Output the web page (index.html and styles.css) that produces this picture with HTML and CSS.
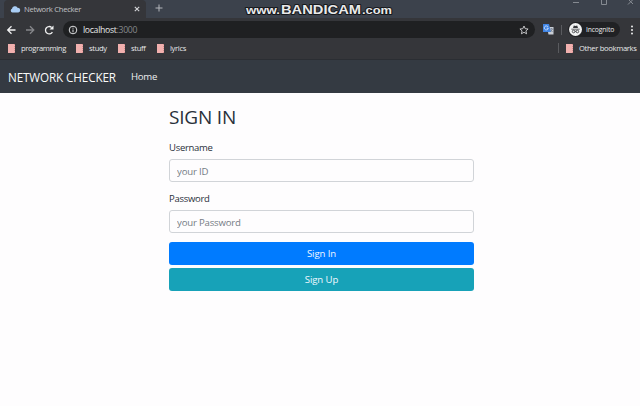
FILE: index.html
```html
<!DOCTYPE html>
<html lang="en">
<head>
<meta charset="utf-8">
<title>Network Checker</title>
<link rel="stylesheet" href="styles.css">
</head>
<body>
<div class="tabstrip">
  <div class="tab">
    <svg class="cloud" width="11" height="8" viewBox="0 0 11 8"><path d="M2.3 7.6A2 2 0 0 1 2 3.8 3 3 0 0 1 7.5 2.7 2.5 2.5 0 0 1 8.4 7.6Z" fill="#a9cdf5"/></svg>
    <span class="tab-title">Network Checker</span>
    <svg class="tab-close" width="6" height="6" viewBox="0 0 6 6"><path d="M.8.8 5.2 5.2M5.2.8.8 5.2" stroke="#d4d5d8" stroke-width="1.1"/></svg>
  </div>
  <svg class="plus" width="8" height="8" viewBox="0 0 8 8"><path d="M4 .5v7M.5 4h7" stroke="#b4b7bc" stroke-width="1"/></svg>
  <div class="window-controls">
    <svg width="60" height="6" viewBox="0 0 60 6" fill="none" stroke="#858a91"><path d="M0 2.5h6"/><path d="M28.500 0v4.500h5V0"/><path d="M55 4.500 60-.500M56 0l4.500 4.500"/></svg>
  </div>
  <svg class="watermark" width="152" height="18" viewBox="0 0 152 18">
    <g font-family="Liberation Sans, sans-serif" font-weight="bold" fill="#e9e9ea" stroke="#17191d" stroke-width="1.8" paint-order="stroke" stroke-linejoin="round">
      <text x="4" y="13.500" font-size="10" textLength="34" lengthAdjust="spacingAndGlyphs">www.</text>
      <text x="39" y="13.500" font-size="12" textLength="80" lengthAdjust="spacingAndGlyphs">BANDICAM</text>
      <text x="120" y="13.500" font-size="10" textLength="30" lengthAdjust="spacingAndGlyphs">.com</text>
    </g>
  </svg>
</div>
<div class="toolbar">
  <div class="nav-icons">
    <svg width="49" height="12" viewBox="0 0 49 12" fill="none" stroke="#f1f1f2" stroke-width="1.300"><path d="M9.500 6H2M5.500 2.200 1.700 6l3.800 3.800"/><path stroke="#85868a" d="M20 6h7.500M24 2.200 27.800 6 24 9.800"/><path d="M46.400 8.100A3.700 3.700 0 1 1 45.600 3.400"/><path fill="#f1f1f2" stroke="none" d="M47.500 1.400v4h-4z"/></svg>
  </div>
  <div class="omnibox">
    <svg width="10" height="10" viewBox="0 0 10 10"><circle cx="5" cy="5" r="3.800" fill="none" stroke="#dcdddf"/><path d="M5 4.500v2.800M5 2.700v1" stroke="#dcdddf"/></svg>
    <span class="url">localhost<span class="port">:3000</span></span>
    <svg class="star" width="10" height="10" viewBox="0 0 10 10"><path d="m5 1 1.200 2.700 2.900.3-2.200 1.900.7 2.900L5 7.300 2.400 8.800l.7-2.900L.9 4l2.900-.3z" fill="none" stroke="#d2d3d5" stroke-width=".9"/></svg>
  </div>
  <svg class="translate" width="11" height="11" viewBox="0 0 11 11"><path d="M4 3h6.500v7.500H5.500z" fill="#c9ced6"/><path d="M0 0h6l2 8H0z" fill="#3f84e4"/><path d="M5.100 3A2 2 0 1 0 5.300 4.200H3.700" fill="none" stroke="#e4efff" stroke-width=".8"/><path d="M7 5h3M8.500 4v1M9.500 5 7.500 8M7.700 6l2 2" stroke="#66717f" stroke-width=".6"/></svg>
  <i class="divider"></i>
  <div class="incognito">
    <svg width="13" height="13" viewBox="0 0 13 13"><circle cx="6.500" cy="6.500" r="6.500" fill="#f2f3f3"/><path d="M2.300 5.700h8.400v.8H2.300zM4 5.100l.8-2.500 1.700.4 1.700-.4.8 2.500z" fill="#34363a"/><g fill="none" stroke="#34363a" stroke-width=".8"><circle cx="4.600" cy="8.500" r="1.300"/><circle cx="8.400" cy="8.500" r="1.300"/><path d="M5.900 8.300h1.200"/></g></svg>
    <span>Incognito</span>
  </div>
  <svg class="more" width="4" height="10" viewBox="0 0 4 10" fill="#ececed"><circle cx="2" cy="1.500" r="1"/><circle cx="2" cy="5" r="1"/><circle cx="2" cy="8.500" r="1"/></svg>
</div>
<div class="bookmarks">
  <i class="page-icon"></i><span class="bm programming">programming</span>
  <i class="page-icon"></i><span class="bm study">study</span>
  <i class="page-icon"></i><span class="bm stuff">stuff</span>
  <i class="page-icon"></i><span class="bm lyrics">lyrics</span>
  <i class="divider last"></i><i class="page-icon"></i><span class="bm other">Other bookmarks</span>
</div>
<nav class="navbar">
  <a class="brand">NETWORK CHECKER</a>
  <a class="home">Home</a>
</nav>
<main class="form">
  <h1>SIGN IN</h1>
  <label for="user">Username</label>
  <input id="user" type="text" placeholder="your ID">
  <label for="pass">Password</label>
  <input id="pass" type="password" placeholder="your Password">
  <button class="primary">Sign In</button>
  <button class="info">Sign Up</button>
</main>
</body>
</html>
```
FILE: styles.css
```css
* { box-sizing: border-box; }
body {
  margin: 0;
  width: 640px;
  height: 406px;
  overflow: hidden;
  background: #fefdfe;
  color: #29303a;
  font-family: "Open Sans", "Noto Sans", sans-serif;
  font-size: 10px;
}
svg { display: block; flex: none; }
.tabstrip {
  position: relative;
  display: flex;
  height: 18px;
  background: #3c424c;
}
.tab {
  display: flex;
  align-items: center;
  width: 142px;
  height: 18px;
  margin-left: 4px;
  padding: 0 6px;
  border-radius: 4px 4px 0 0;
  background: #35363a;
}
.tab-title {
  margin-left: 3px;
  color: #c2c3c7;
  font-size: 7.7px;
  line-height: 16px;
  letter-spacing: -.3px;
  white-space: nowrap;
}
.tab-close { margin-left: auto; }
.plus { margin: 4px 0 0 9px; }
.window-controls { margin: 0 32px 0 auto; width: 34px; }
.window-controls svg { margin-left: -1px; }
.watermark { position: absolute; left: 242px; top: 0; }
.toolbar {
  display: flex;
  align-items: center;
  height: 23px;
  background: #35363a;
}
.nav-icons { width: 63px; padding-left: 6px; }
.omnibox {
  display: flex;
  align-items: center;
  width: 472px;
  height: 17px;
  padding: 0 6px 0 5px;
  border-radius: 9px;
  background: #1f2022;
}
.url {
  margin-left: 5px;
  color: #e6e7e8;
  font-size: 8.7px;
  line-height: 16px;
  letter-spacing: -.32px;
}
.port { color: #85888c; }
.star { margin-left: auto; }
.translate { margin-left: 8px; }
.divider {
  flex: none;
  width: 1px;
  height: 10px;
  margin-left: 7px;
  background: #5a5b5f;
}
.incognito {
  display: flex;
  align-items: center;
  width: 52px;
  height: 15px;
  margin-left: 6px;
  padding-left: 1px;
  border-radius: 8px;
  background: #202124;
  color: #eceded;
  font-size: 6.8px;
  letter-spacing: -.15px;
}
.incognito span { margin-left: 4px; }
.more { margin-left: 10px; }
.bookmarks {
  display: flex;
  align-items: center;
  height: 18px;
  padding: 0 4px 4px 8px;
  background: #35363a;
  color: #e8e9ea;
  font-size: 7.6px;
  line-height: 12px;
  letter-spacing: -.32px;
}
.page-icon {
  flex: none;
  width: 7px;
  height: 9px;
  margin-top: 1px;
  border-right: 1px dotted #d58d8d;
  background: #f1b0ae;
}
.bm { flex: none; margin-left: 6px; white-space: nowrap; }
.programming { width: 55px; }
.study { width: 29px; }
.stuff { width: 26px; }
.last { margin-left: auto; margin-right: 7px; }
.other { width: 57px; }
.navbar {
  display: flex;
  align-items: center;
  height: 34px;
  padding-left: 8px;
  border-top: 1px solid #2b2e33;
  background: #343a42;
}
.brand { width: 123px; color: #fafafa; font-size: 11.7px; letter-spacing: -.12px; white-space: nowrap; }
.home { color: #eeeff0; font-size: 9.6px; letter-spacing: -.25px; }
.form { display: flex; flex-direction: column; width: 305px; margin-left: 169px; }
h1 {
  height: 26px;
  margin: 11px 0 10px;
  font-size: 19px;
  font-weight: 400;
  line-height: 26px;
  letter-spacing: -.2px;
}
label { height: 15px; margin-bottom: 4px; font-size: 9.5px; line-height: 15px; letter-spacing: -.28px; }
input {
  height: 23px;
  margin: 0 0 9px;
  padding: 1px 7px 0;
  border: 1px solid #d1d4d8;
  border-radius: 3px;
  background: #fefdfe;
  font: 9.6px "Open Sans", sans-serif;
  letter-spacing: -.18px;
}
input::placeholder { color: #757c84; opacity: 1; }
button {
  height: 23px;
  margin: 0 0 3px;
  padding: 0;
  border: 0;
  border-radius: 3px;
  color: #f1f8ff;
  font: 9.6px "Open Sans", sans-serif;
  letter-spacing: -.1px;
}
.primary { background: #007bff; }
.info { background: #17a2b8; }
```
